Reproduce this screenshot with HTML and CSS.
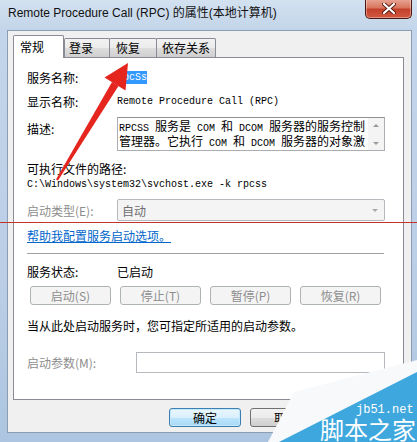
FILE: index.html
```html
<!DOCTYPE html>
<html lang="zh-CN">
<head>
  <meta charset="UTF-8">
  <title>Remote Procedure Call (RPC) 的属性(本地计算机)</title>
  <link rel="stylesheet" href="styles.css">
</head>
<body>
<div class="window">
  <div class="titlebar">
    <span class="title">Remote Procedure Call (RPC) 的属性(本地计算机)</span>
    <div class="close-btn">
      <svg width="14" height="11" viewBox="0 0 14 11"><path d="M2 1 L12 10 M12 1 L2 10" stroke="#5a1a10" stroke-width="4" stroke-linecap="round"/><path d="M2 1 L12 10 M12 1 L2 10" stroke="#fff" stroke-width="2.2" stroke-linecap="round"/></svg>
    </div>
  </div>

  <div class="client">
    <div class="tabs">
      <div class="tab active t1">常规</div>
      <div class="tab t2">登录</div>
      <div class="tab t3">恢复</div>
      <div class="tab t4">依存关系</div>
    </div>

    <div class="panel">
      <div class="row r-name">
        <span class="label">服务名称:</span>
        <span class="mono"><span class="selected">rpcSs</span></span>
      </div>
      <div class="row r-display">
        <span class="label">显示名称:</span>
        <span class="mono">Remote Procedure Call (RPC)</span>
      </div>
      <div class="row r-desc">
        <span class="label">描述:</span>
        <div class="desc-box">
          <div class="desc-text">
            <div class="desc-line"><span class="lat">RPCSS </span>服务是<span class="lat"> COM </span>和<span class="lat"> DCOM </span>服务器的服务控制</div>
            <div class="desc-line">管理器。它执行<span class="lat"> COM </span>和<span class="lat"> DCOM </span>服务器的对象激</div>
          </div>
          <div class="scrollbar">
            <span class="arrow up"></span>
            <span class="arrow down"></span>
          </div>
        </div>
      </div>
      <div class="row r-pathlabel">可执行文件的路径:</div>
      <div class="row r-path mono">C:\Windows\system32\svchost.exe -k rpcss</div>
      <div class="row r-type">
        <span class="label disabled">启动类型(E):</span>
        <div class="combo">
          <span>自动</span>
          <span class="combo-arrow"></span>
        </div>
      </div>
      <div class="row r-link"><a class="link">帮助我配置服务启动选项。</a></div>
      <div class="separator"></div>
      <div class="row r-status">
        <span class="label">服务状态:</span>
        <span>已启动</span>
      </div>
      <div class="actions">
        <div class="btn disabled">启动(S)</div>
        <div class="btn disabled">停止(T)</div>
        <div class="btn disabled">暂停(P)</div>
        <div class="btn disabled">恢复(R)</div>
      </div>
      <div class="row r-hint">当从此处启动服务时，您可指定所适用的启动参数。</div>
      <div class="row r-params">
        <span class="label params-label disabled">启动参数(M):</span>
        <div class="input"></div>
      </div>
    </div>

    <div class="footer">
      <div class="btn default">确定</div>
      <div class="btn">取消</div>
      <div class="btn">应用(A)</div>
    </div>
  </div>

  <!-- annotation drawn on the screenshot -->
  <div class="red-line"></div>
  <svg class="overlay" width="417" height="442" viewBox="0 0 417 442">
    <polygon points="128,63 104.5,77.5 125.5,90.5" fill="#e4261f"/>
    <polygon points="112,82 118.5,86 58,180.5 56,179.5" fill="#e4261f"/>
  </svg>

  <!-- watermark -->
  <svg class="overlay" width="417" height="442" viewBox="0 0 417 442">
    <polygon points="268,442 294,392 417,360 417,442" fill="#f7f9fb"/>
    <polygon points="279,442 417,372 417,442" fill="#3ea8de"/>
    <text x="356" y="413" class="wm-small">jb51.net</text>
    <text x="320" y="439" class="wm-big">脚本之家</text>
  </svg>
</div>
</body>
</html>
```

FILE: styles.css
```css
* {
  box-sizing: border-box;
}
html, body {
  margin: 0;
}
body {
  width: 417px;
  height: 442px;
  overflow: hidden;
  font-family: "Noto Sans CJK SC", sans-serif;
  font-size: 12px;
  color: #000;
}
.window {
  position: relative;
  width: 417px;
  height: 442px;
  padding: 0 5px 9px 7px;
  display: flex;
  flex-direction: column;
  background: linear-gradient(180deg, #d3e1f0 0px, #c3d5ea 30px, #b9cde5 300px, #adc5e0 442px);
}
.titlebar {
  height: 30px;
  display: flex;
  justify-content: space-between;
  align-items: flex-start;
}
.title {
  margin-top: 5px;
  margin-left: 1px;
  font-family: "Liberation Sans", "Noto Sans CJK SC", sans-serif;
  font-size: 12px;
  line-height: 16px;
  color: #111;
}
.close-btn {
  width: 47px;
  height: 20px;
  margin-top: -1px;
  display: flex;
  align-items: center;
  justify-content: center;
  border: 1px solid #4a1a12;
  border-top: none;
  border-radius: 0 0 5px 5px;
  background: linear-gradient(180deg, #e9a797 0%, #d9765f 45%, #c5412b 55%, #d2583f 100%);
  box-shadow: inset 0 0 0 1px rgba(255, 255, 255, 0.35);
}
.client {
  flex: 1;
  background: #f0f0f0;
  border: 1px solid #8a9db3;
  padding-top: 4px;
}
.tabs {
  display: flex;
  align-items: flex-end;
  height: 22px;
  padding-left: 5px;
  position: relative;
  z-index: 2;
}
.tab {
  height: 19px;
  line-height: 17px;
  padding-left: 5px;
  border: 1px solid #898c95;
  border-bottom: none;
  border-radius: 2px 2px 0 0;
  margin-right: -1px;
  background: linear-gradient(180deg, #f2f2f2 0%, #ebebeb 50%, #dddddd 51%, #cfcfcf 100%);
  white-space: nowrap;
}
.tab.active {
  height: 23px;
  line-height: 21px;
  margin-bottom: -1px;
  padding-left: 6px;
  background: #fff;
  margin-right: 0;
}
.t1 { width: 51px; }
.t2 { width: 46px; padding-left: 4px; }
.t3 { width: 48px; padding-left: 6px; }
.t4 { width: 60px; }
.panel {
  margin-left: 5px;
  width: 391px;
  height: 343px;
  background: #fff;
  border: 1px solid #898c95;
  padding: 0 18px 0 13px;
  position: relative;
  z-index: 1;
}
.row {
  display: flex;
  align-items: center;
  height: 18px;
  white-space: nowrap;
}
.label {
  width: 90px;
  flex: none;
}
.mono {
  font-family: "Liberation Mono", monospace;
  font-size: 10px;
}
.lat {
  font-family: "Liberation Mono", monospace;
  font-size: 10px;
}
.selected {
  background: #3399ff;
  color: #fff;
  padding: 1px 0;
}
.disabled {
  color: #8d8d8d;
}
.r-name { margin-top: 10px; }
.r-display { margin-top: 6px; }
.r-desc {
  margin-top: 7px;
  height: 34px;
  align-items: flex-start;
}
.r-desc .label {
  margin-top: 3px;
  line-height: 18px;
}
.desc-box {
  width: 268px;
  height: 34px;
  border: 1px solid #abadb3;
  border-top-color: #8e9096;
  display: flex;
}
.desc-text {
  flex: 1;
  padding-left: 1px;
  padding-top: 0;
}
.desc-line {
  height: 15px;
  line-height: 15px;
  white-space: pre;
}
.scrollbar {
  width: 16px;
  background: #f4f4f4;
  display: flex;
  flex-direction: column;
  align-items: center;
  justify-content: space-between;
  padding: 6px 0 5px;
}
.arrow {
  width: 0;
  height: 0;
  border-left: 3px solid transparent;
  border-right: 3px solid transparent;
}
.arrow.up { border-bottom: 3px solid #9a9a9a; }
.arrow.down { border-top: 3px solid #9a9a9a; }
.r-pathlabel {
  margin-top: 9px;
  height: 16px;
}
.r-path {
  height: 16px;
}
.r-type {
  margin-top: 7px;
  height: 22px;
}
.combo {
  width: 268px;
  height: 22px;
  border: 1px solid #b5b8bd;
  border-radius: 2px;
  background: #f4f4f4;
  color: #6d6d6d;
  display: flex;
  align-items: center;
  justify-content: space-between;
  padding: 0 6px 0 4px;
}
.combo-arrow {
  width: 0;
  height: 0;
  border-left: 3px solid transparent;
  border-right: 3px solid transparent;
  border-top: 3px solid #a8a8a8;
}
.r-link { margin-top: 5px; }
.link {
  color: #0066cc;
  text-decoration: underline;
}
.separator {
  margin-top: 9px;
  width: 357px;
  height: 2px;
  border-top: 1px solid #a0a0a0;
  border-bottom: 1px solid #fff;
}
.r-status { margin-top: 7px; }
.actions {
  display: flex;
  gap: 9px;
  margin-top: 6px;
  margin-left: 3px;
}
.btn {
  width: 81px;
  height: 19px;
  border: 1px solid #707070;
  border-radius: 3px;
  background: linear-gradient(180deg, #f2f2f2 0%, #ebebeb 50%, #dddddd 51%, #cfcfcf 100%);
  display: flex;
  align-items: center;
  justify-content: center;
  line-height: 1;
}
.btn.disabled {
  border-color: #adb2b5;
  background: #f4f4f4;
  color: #8d8d8d;
}
.r-hint { margin-top: 11px; }
.r-params {
  margin-top: 18px;
  height: 21px;
}
.params-label {
  width: 109px;
}
.input {
  width: 249px;
  height: 21px;
  border: 1px solid #b5b8bd;
  background: #fff;
}
.footer {
  display: flex;
  justify-content: flex-end;
  gap: 9px;
  margin-top: 8px;
  padding-right: 8px;
}
.footer .btn {
  width: 72px;
}
.btn.default {
  border-color: #3c7fb1;
  background: linear-gradient(180deg, #eaf6fd 0%, #d9f0fc 50%, #bee6fd 51%, #a7d9f5 100%);
  box-shadow: inset 0 0 0 1px #c5e7fa;
}
.red-line {
  position: absolute;
  left: 0;
  top: 222px;
  width: 417px;
  height: 1px;
  background: #c53228;
  z-index: 5;
}
.overlay {
  position: absolute;
  left: 0;
  top: 0;
  pointer-events: none;
  z-index: 6;
}
.wm-small {
  font-family: "Liberation Mono", monospace;
  font-size: 12px;
  fill: #fff;
}
.wm-big {
  font-family: "Noto Sans CJK SC", sans-serif;
  font-size: 24px;
  fill: #fff;
}
```
